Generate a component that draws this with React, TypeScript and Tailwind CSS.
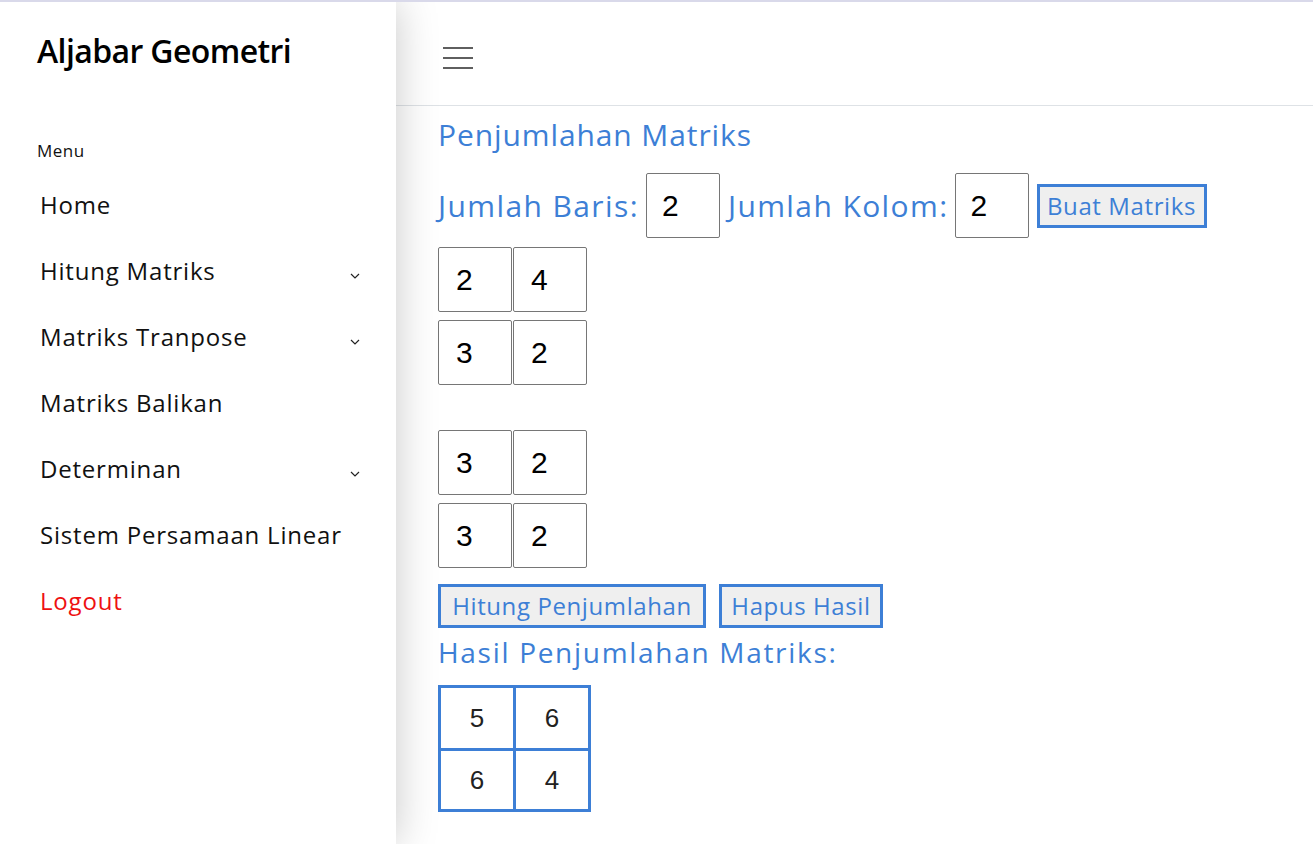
import React from "react";

const F = { fontFamily: '"Open Sans", "Noto Sans", sans-serif' };
const A = { fontFamily: '"Liberation Sans", Arial, sans-serif' };

function Chevron() {
  return (
    <svg width="10" height="6" viewBox="0 0 10 6" className="mt-[10px]">
      <path d="M1 1 L5 5 L9 1" fill="none" stroke="#222" strokeWidth="1.2" />
    </svg>
  );
}

function MenuItem({ label, chevron, red }: { label: string; chevron?: boolean; red?: boolean }) {
  return (
    <div className="h-[66px] flex items-center justify-between pl-[40px] pr-[36px]">
      <span className={`text-[24px] tracking-[0.8px] ${red ? "text-[#ee1111]" : "text-[#111]"}`}>{label}</span>
      {chevron && <Chevron />}
    </div>
  );
}

function Cell({ v }: { v: string }) {
  return (
    <div
      className="w-[74px] h-[65px] border border-[#767676] rounded-[2px] bg-white flex items-center pl-[17px] text-[30px] text-black"
      style={A}
    >
      {v}
    </div>
  );
}

function Matrix({ rows }: { rows: string[][] }) {
  return (
    <div className="flex flex-col gap-[8px]">
      {rows.map((r, i) => (
        <div key={i} className="flex gap-[1px]">
          {r.map((v, j) => (
            <Cell key={j} v={v} />
          ))}
        </div>
      ))}
    </div>
  );
}

function Btn({ label, w }: { label: string; w: string }) {
  return (
    <div
      className={`${w} h-[44px] border-[3px] border-[#3d7fd6] bg-[#efefef] flex items-center justify-center text-[24px] tracking-[0.6px] text-[#3d7fd6]`}
    >
      {label}
    </div>
  );
}

export default function App() {
  return (
    <div className="w-[1313px] h-[844px] overflow-hidden border-t-2 border-[#d9d9ea] flex bg-white" style={F}>
      <aside className="w-[396px] shrink-0 bg-white relative z-10 shadow-[0_0_40px_rgba(0,0,0,0.22)]">
        <div className="pl-[37px] pt-[29px] text-[32px] font-semibold tracking-[-0.6px] text-black leading-[40px]">
          Aljabar Geometri
        </div>
        <div className="pl-[37px] mt-[70px] text-[17px] tracking-[0.5px] text-[#111] leading-[20px]">Menu</div>
        <div className="mt-[11px]">
          <MenuItem label="Home" />
          <MenuItem label="Hitung Matriks" chevron />
          <MenuItem label="Matriks Tranpose" chevron />
          <MenuItem label="Matriks Balikan" />
          <MenuItem label="Determinan" chevron />
          <MenuItem label="Sistem Persamaan Linear" />
          <MenuItem label="Logout" red />
        </div>
      </aside>
      <main className="flex-1 bg-white">
        <header className="h-[104px] border-b border-[#dee2e6] flex items-center pl-[47px]">
          <svg width="30" height="24" viewBox="0 0 30 24" className="mt-[8px]">
            <rect x="0" y="1" width="30" height="2" fill="#5f5f5f" />
            <rect x="0" y="11" width="30" height="2" fill="#5f5f5f" />
            <rect x="0" y="21" width="30" height="2" fill="#5f5f5f" />
          </svg>
        </header>
        <div className="pl-[42px] text-[#3d7fd6]">
          <div className="mt-[11px] text-[30px] tracking-[0.9px] leading-[36px]">Penjumlahan Matriks</div>
          <div className="mt-[20px] flex items-center text-[30px] tracking-[1.4px]">
            <span>Jumlah Baris:</span>
            <div
              className="ml-[7px] w-[74px] h-[65px] border border-[#767676] rounded-[2px] flex items-center pl-[15px] text-[30px] tracking-normal text-black"
              style={A}
            >
              2
            </div>
            <span className="ml-[8px]">Jumlah Kolom:</span>
            <div
              className="ml-[6px] w-[74px] h-[65px] border border-[#767676] rounded-[2px] flex items-center pl-[15px] text-[30px] tracking-normal text-black"
              style={A}
            >
              2
            </div>
            <div className="ml-[8px] tracking-normal">
              <Btn label="Buat Matriks" w="w-[170px]" />
            </div>
          </div>
          <div className="mt-[9px]">
            <Matrix rows={[["2", "4"], ["3", "2"]]} />
          </div>
          <div className="mt-[45px]">
            <Matrix rows={[["3", "2"], ["3", "2"]]} />
          </div>
          <div className="mt-[16px] flex gap-[13px]">
            <Btn label="Hitung Penjumlahan" w="w-[268px]" />
            <Btn label="Hapus Hasil" w="w-[164px]" />
          </div>
          <div className="mt-[6px] text-[28px] tracking-[1.7px] leading-[36px]">Hasil Penjumlahan Matriks:</div>
          <table className="mt-[15px] border-collapse border-[3px] border-[#3d7fd6] text-[26px] text-[#222]" style={A}>
            <tbody>
              <tr>
                <td className="border-[3px] border-[#3d7fd6] w-[75px] h-[63px] text-center">5</td>
                <td className="border-[3px] border-[#3d7fd6] w-[75px] h-[63px] text-center">6</td>
              </tr>
              <tr>
                <td className="border-[3px] border-[#3d7fd6] w-[75px] h-[61px] text-center">6</td>
                <td className="border-[3px] border-[#3d7fd6] w-[75px] h-[61px] text-center">4</td>
              </tr>
            </tbody>
          </table>
        </div>
      </main>
    </div>
  );
}
